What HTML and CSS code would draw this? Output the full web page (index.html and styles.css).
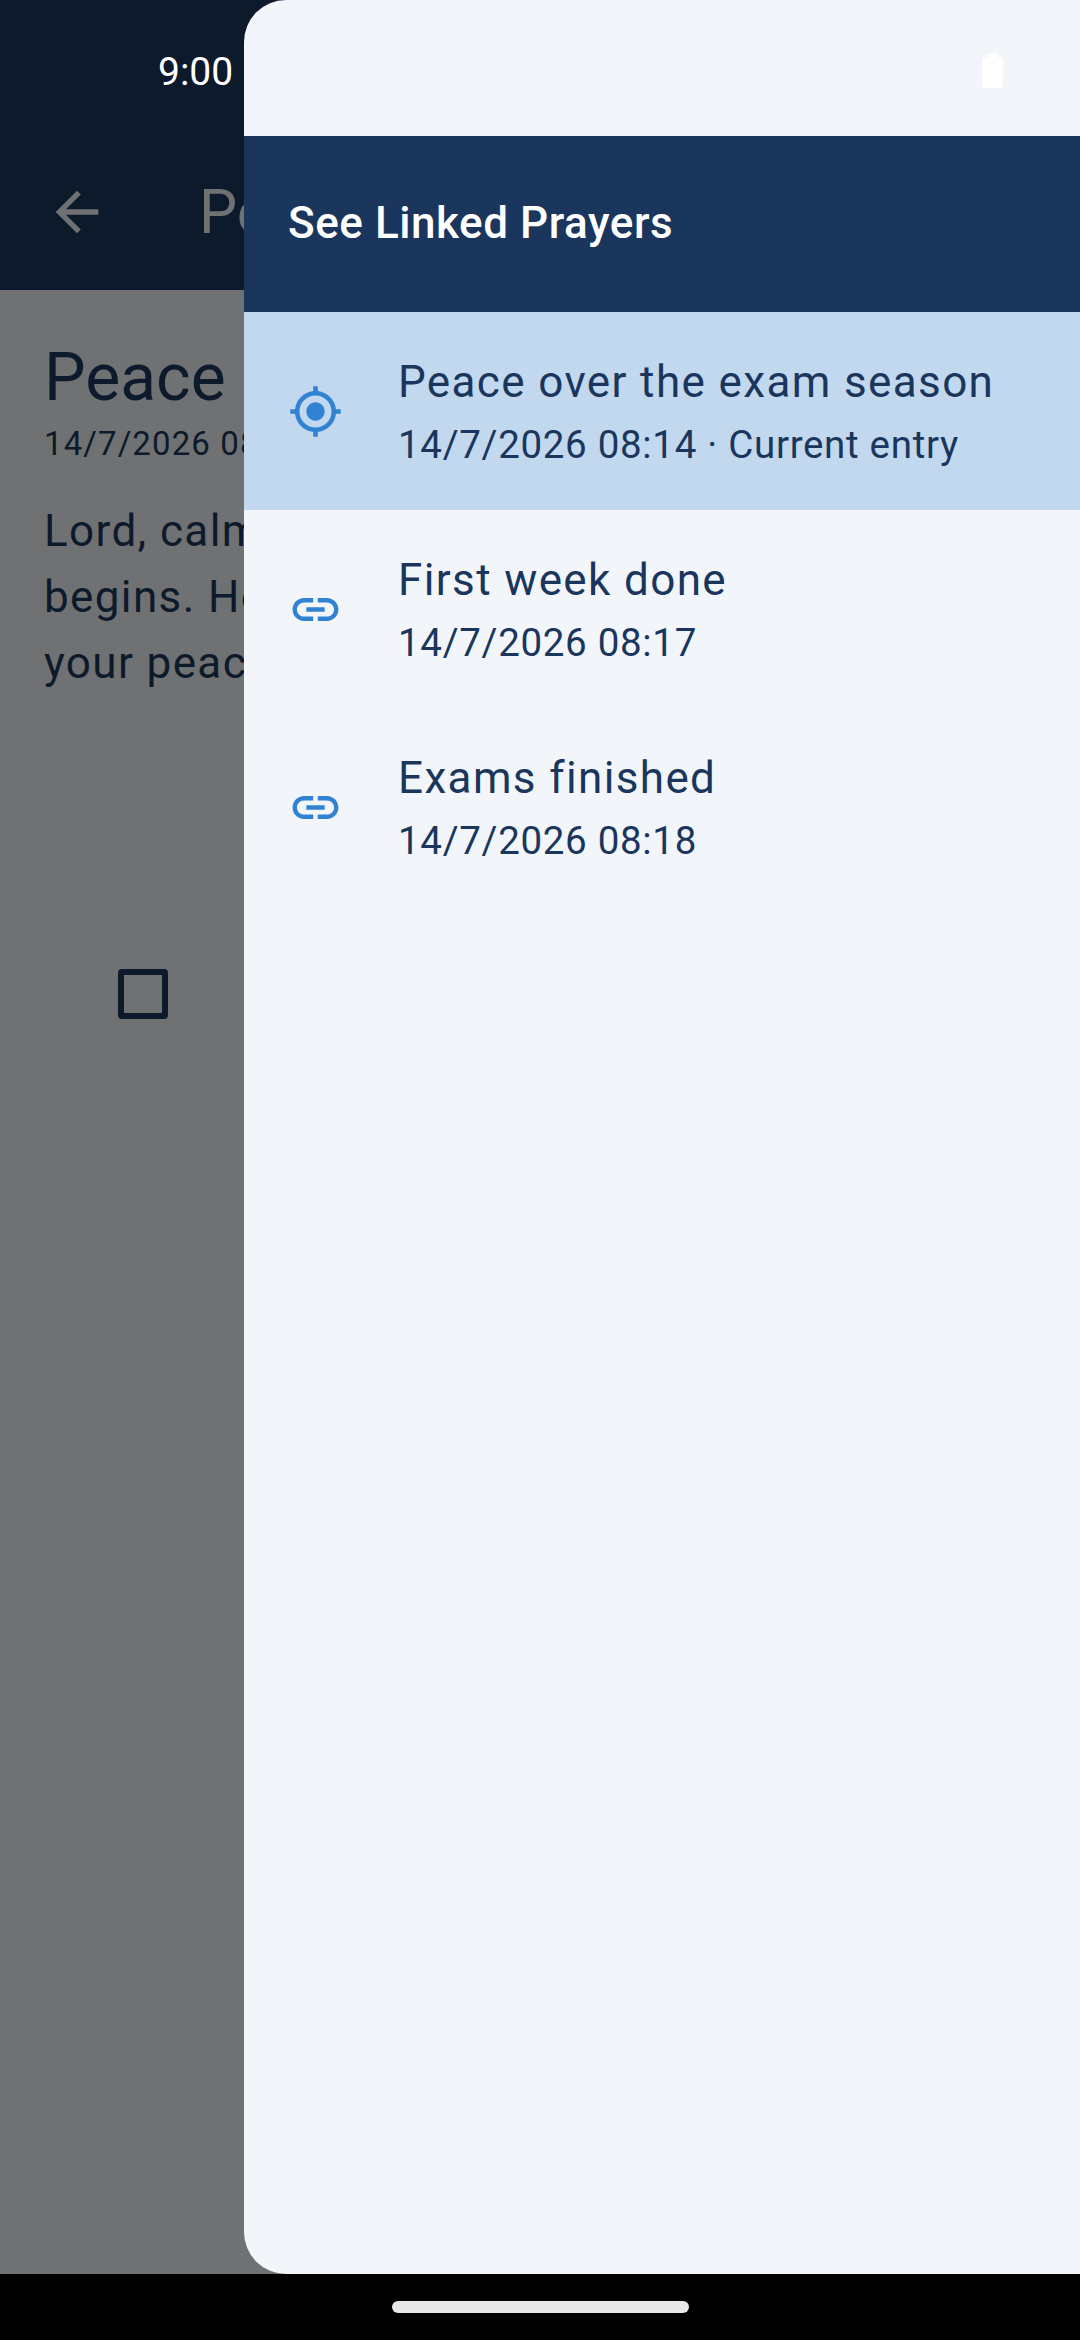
FILE: index.html
```html
<!DOCTYPE html>
<html lang="en">
<head>
  <meta charset="UTF-8">
  <title>See Linked Prayers</title>
  <link rel="stylesheet" href="styles.css">
</head>
<body>
  <div class="screen">
    <div class="page">
      <div class="status-bar">
        <span class="clock">9:00</span>
      </div>
      <div class="app-bar">
        <svg class="back-icon" viewBox="0 0 24 24"><path d="M20 11H7.83l5.59-5.59L12 4l-8 8 8 8 1.41-1.41L7.83 13H20v-2z"/></svg>
        <span class="app-title">Peace over the exam season</span>
      </div>
      <div class="entry">
        <h1 class="entry-title">Peace over the exam season</h1>
        <div class="entry-date">14/7/2026 08:14</div>
        <p class="entry-body">Lord, calm my heart as this exam season begins. Help me to rest and to trust in<br>your peace.</p>
        <div class="entry-actions">
          <span class="checkbox"></span>
        </div>
      </div>
    </div>

    <div class="nav-bar">
      <span class="home-pill"></span>
    </div>

    <div class="drawer">
      <div class="drawer-status">
        <svg class="battery" viewBox="0 0 21 35"><path d="M6 0h9v4h4a2 2 0 0 1 2 2v27a2 2 0 0 1-2 2H2a2 2 0 0 1-2-2V6a2 2 0 0 1 2-2h4z"/></svg>
      </div>
      <div class="drawer-header">See Linked Prayers</div>
      <ul class="links">
        <li class="link-row current">
          <svg class="row-icon" viewBox="0 0 24 24"><path d="M12 8c-2.21 0-4 1.79-4 4s1.79 4 4 4 4-1.79 4-4-1.79-4-4-4zm8.94 3c-.46-4.17-3.77-7.48-7.94-7.94V1h-2v2.06C6.83 3.52 3.52 6.83 3.06 11H1v2h2.06c.46 4.17 3.77 7.48 7.94 7.94V23h2v-2.06c4.17-.46 7.48-3.77 7.94-7.94H23v-2h-2.06zM12 19c-3.87 0-7-3.13-7-7s3.13-7 7-7 7 3.13 7 7-3.13 7-7 7z"/></svg>
          <div class="row-text">
            <div class="row-title">Peace over the exam season</div>
            <div class="row-date">14/7/2026 08:14 · Current entry</div>
          </div>
        </li>
        <li class="link-row">
          <svg class="row-icon" viewBox="0 0 24 24"><path d="M3.9 12c0-1.71 1.39-3.1 3.1-3.1h4V7H7c-2.76 0-5 2.24-5 5s2.24 5 5 5h4v-1.9H7c-1.71 0-3.1-1.39-3.1-3.1zM8 13h8v-2H8v2zm9-6h-4v1.9h4c1.71 0 3.1 1.39 3.1 3.1s-1.39 3.1-3.1 3.1h-4V17h4c2.76 0 5-2.24 5-5s-2.24-5-5-5z"/></svg>
          <div class="row-text">
            <div class="row-title">First week done</div>
            <div class="row-date">14/7/2026 08:17</div>
          </div>
        </li>
        <li class="link-row">
          <svg class="row-icon" viewBox="0 0 24 24"><path d="M3.9 12c0-1.71 1.39-3.1 3.1-3.1h4V7H7c-2.76 0-5 2.24-5 5s2.24 5 5 5h4v-1.9H7c-1.71 0-3.1-1.39-3.1-3.1zM8 13h8v-2H8v2zm9-6h-4v1.9h4c1.71 0 3.1 1.39 3.1 3.1s-1.39 3.1-3.1 3.1h-4V17h4c2.76 0 5-2.24 5-5s-2.24-5-5-5z"/></svg>
          <div class="row-text">
            <div class="row-title">Exams finished</div>
            <div class="row-date">14/7/2026 08:18</div>
          </div>
        </li>
      </ul>
    </div>
  </div>
</body>
</html>
```

FILE: styles.css
```css
* {
  box-sizing: border-box;
}

body {
  margin: 0;
  font-family: Roboto, sans-serif;
  background: #000;
}

.screen {
  position: relative;
  width: 1080px;
  height: 2340px;
  display: flex;
  flex-direction: column;
  overflow: hidden;
}

.page {
  flex: 1;
  display: flex;
  flex-direction: column;
  background: #707172;
}

.status-bar {
  height: 136px;
  padding: 50px 0 0 158px;
  background: #0c1a2b;
}

.clock {
  color: #fff;
  font-size: 39px;
  line-height: 44px;
}

.app-bar {
  height: 154px;
  display: flex;
  align-items: center;
  padding: 0 0 2px 45px;
  background: #0c1a2b;
}

.back-icon {
  width: 64px;
  height: 64px;
  fill: #707172;
}

.app-title {
  margin-left: 90px;
  color: #707172;
  font-size: 60.5px;
  white-space: nowrap;
}

.entry {
  padding: 44px 44px;
  color: #0c1a2b;
}

.entry-title {
  margin: 0;
  font-size: 66px;
  font-weight: 400;
  line-height: 88px;
  white-space: nowrap;
}

.entry-date {
  font-size: 33px;
  line-height: 44px;
  letter-spacing: 1.1px;
}

.entry-body {
  width: 992px;
  margin: 32px 0 0;
  font-size: 44px;
  line-height: 66px;
  letter-spacing: 1.375px;
}

.entry-actions {
  padding: 273px 0 0 74px;
}

.checkbox {
  display: block;
  width: 50px;
  height: 50px;
  border: 6px solid #0c1a2b;
  border-radius: 4px;
}

.nav-bar {
  height: 66px;
  display: flex;
  justify-content: center;
  padding-top: 27px;
  background: #000;
}

.home-pill {
  width: 297px;
  height: 12px;
  border-radius: 6px;
  background: #e8e8e8;
}

.drawer {
  position: absolute;
  top: 0;
  left: 244px;
  right: 0;
  bottom: 66px;
  background: #f2f6fb;
  border-radius: 42px 0 0 42px;
  overflow: hidden;
}

.drawer-status {
  height: 136px;
  display: flex;
  justify-content: flex-end;
  padding: 53px 77px 0 0;
}

.battery {
  width: 21px;
  height: 35px;
  fill: #fff;
}

.drawer-header {
  height: 176px;
  padding-left: 44px;
  background: #1b365d;
  color: #fff;
  font-size: 44px;
  font-weight: 500;
  line-height: 174px;
  letter-spacing: 0.55px;
}

.links {
  margin: 0;
  padding: 0;
  list-style: none;
}

.link-row {
  height: 198px;
  display: flex;
  align-items: center;
  padding-left: 44px;
  color: #1b365d;
}

.link-row.current {
  background: #c2d8ef;
}

.row-icon {
  flex: none;
  width: 55px;
  height: 55px;
  fill: #3182d2;
}

.row-text {
  margin-left: 55px;
  padding-bottom: 1px;
}

.row-title {
  font-size: 44px;
  line-height: 66px;
  letter-spacing: 1.375px;
}

.row-date {
  margin-top: 2px;
  font-size: 38.5px;
  line-height: 55px;
  letter-spacing: 0.69px;
}
```
